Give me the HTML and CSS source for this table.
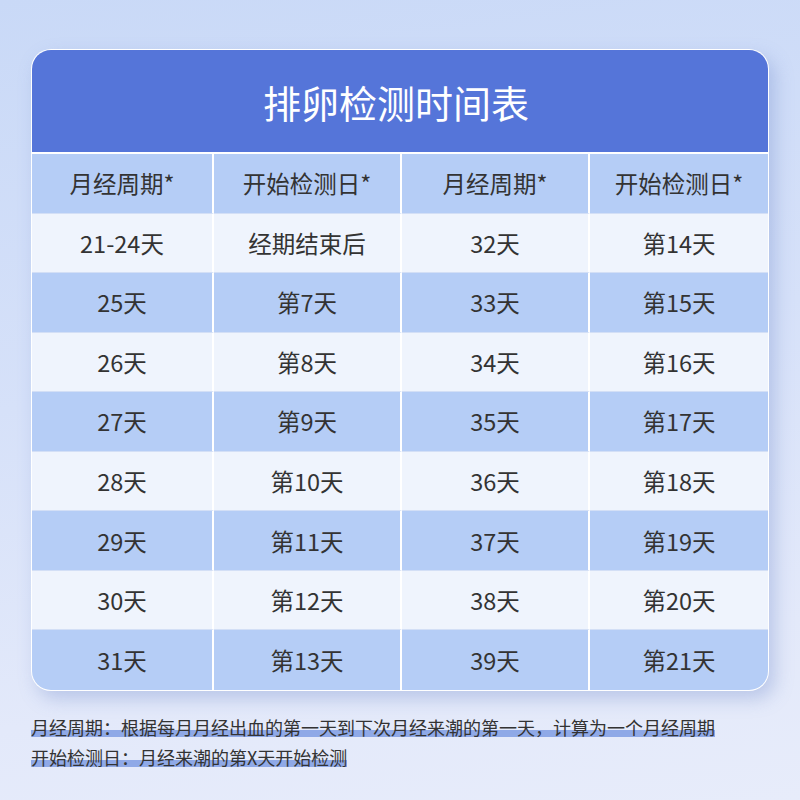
FILE: index.html
```html
<!DOCTYPE html>
<html lang="zh-CN">
<head>
<meta charset="utf-8">
<title>排卵检测时间表</title>
<link rel="stylesheet" href="styles.css">
</head>
<body>
<main class="page">
  <section class="card">
    <h1 class="title">排卵检测时间表</h1>
    <div class="grid">
      <div class="cell head">月经周期*</div>
      <div class="cell head">开始检测日*</div>
      <div class="cell head">月经周期*</div>
      <div class="cell head">开始检测日*</div>

      <div class="cell light">21-24天</div>
      <div class="cell light">经期结束后</div>
      <div class="cell light">32天</div>
      <div class="cell light">第14天</div>

      <div class="cell blue">25天</div>
      <div class="cell blue">第7天</div>
      <div class="cell blue">33天</div>
      <div class="cell blue">第15天</div>

      <div class="cell light">26天</div>
      <div class="cell light">第8天</div>
      <div class="cell light">34天</div>
      <div class="cell light">第16天</div>

      <div class="cell blue">27天</div>
      <div class="cell blue">第9天</div>
      <div class="cell blue">35天</div>
      <div class="cell blue">第17天</div>

      <div class="cell light">28天</div>
      <div class="cell light">第10天</div>
      <div class="cell light">36天</div>
      <div class="cell light">第18天</div>

      <div class="cell blue">29天</div>
      <div class="cell blue">第11天</div>
      <div class="cell blue">37天</div>
      <div class="cell blue">第19天</div>

      <div class="cell light">30天</div>
      <div class="cell light">第12天</div>
      <div class="cell light">38天</div>
      <div class="cell light">第20天</div>

      <div class="cell blue last">31天</div>
      <div class="cell blue last">第13天</div>
      <div class="cell blue last">39天</div>
      <div class="cell blue last">第21天</div>
    </div>
  </section>
  <div class="notes">
    <p class="note"><span class="mark">月经周期：根据每月月经出血的第一天到下次月经来潮的第一天，计算为一个月经周期</span></p>
    <p class="note"><span class="mark">开始检测日：月经来潮的第X天开始检测</span></p>
  </div>
</main>
</body>
</html>
```

FILE: styles.css
```css
* { box-sizing: border-box; }

html, body {
  margin: 0;
  padding: 0;
}

body {
  width: 800px;
  height: 800px;
  overflow: hidden;
  font-family: "Noto Sans CJK SC", "Noto Sans", sans-serif;
  color: #333;
  background: linear-gradient(172deg, #c9d9f7 0%, #d6e1f9 45%, #e3e9fa 80%, #e7ecfa 100%);
}

.page {
  padding: 49px 31px 0 31px;
}

.card {
  width: 738px;
  border: 1px solid rgba(255, 255, 255, 0.85);
  border-radius: 20px;
  overflow: hidden;
  background: #ffffff;
  box-shadow: 6px 8px 18px rgba(110, 135, 200, 0.35);
}

.title {
  margin: 0;
  height: 104px;
  display: flex;
  align-items: center;
  justify-content: center;
  padding-right: 8px;
  background: #5575d9;
  border-bottom: 2px solid #ffffff;
  color: #ffffff;
  font-size: 38px;
  font-weight: 400;
}

.grid {
  display: grid;
  grid-template-columns: 182px 188px 188px 178px;
  grid-auto-rows: 59.55px;
}

.cell {
  display: flex;
  align-items: center;
  justify-content: center;
  font-size: 23.5px;
  color: #333;
  border-right: 2px solid #ffffff;
  border-bottom: 1px solid #d3dff6;
}

.cell:nth-child(4n) {
  border-right: none;
}

.cell.last {
  border-bottom: none;
}

.head,
.blue {
  background: #b5cdf6;
}

.light {
  background: #eff4fd;
}

.notes {
  padding-top: 21px;
}

.note {
  margin: 0;
  font-size: 18px;
  line-height: 30px;
  letter-spacing: 0;
  color: #333;
}

.mark {
  background-image: linear-gradient(#8fa9e7, #8fa9e7);
  background-repeat: no-repeat;
  background-size: 100% 7px;
  background-position: 0 calc(100% - 3px);
}
```
